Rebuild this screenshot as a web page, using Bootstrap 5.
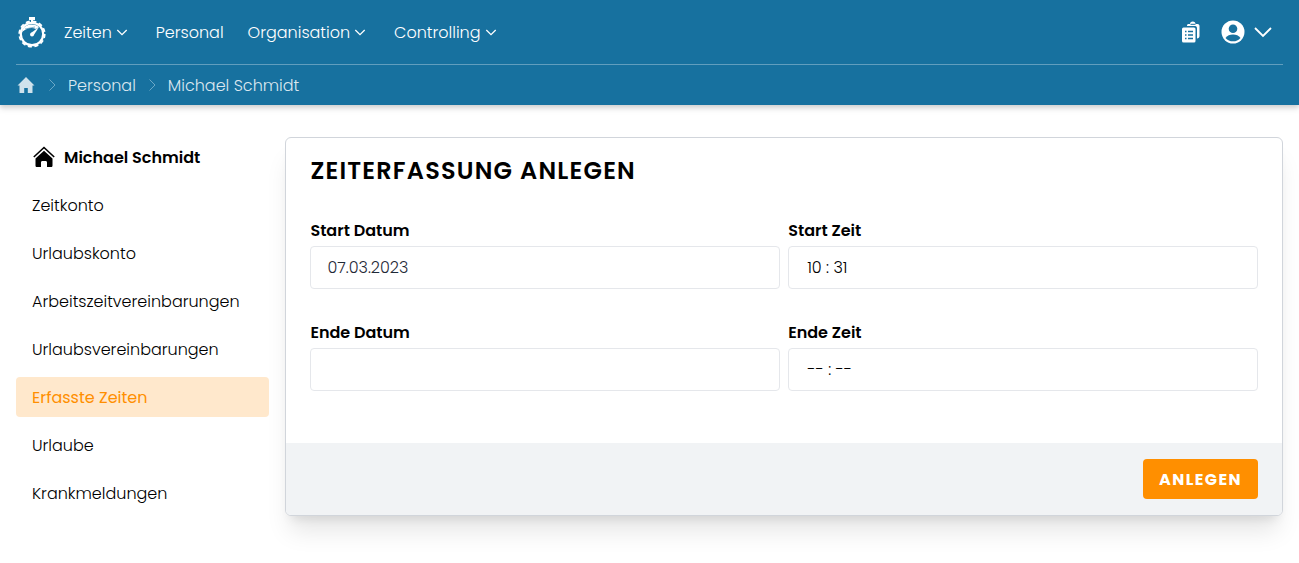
<!DOCTYPE html>
<html lang="de">
<head>
<meta charset="utf-8">
<meta name="viewport" content="width=device-width, initial-scale=1">
<title>Zeiterfassung anlegen</title>
<link href="https://cdn.jsdelivr.net/npm/bootstrap@5.3.0/dist/css/bootstrap.min.css" rel="stylesheet">
<style>
  body { font-family: Poppins, Inter, "Open Sans", sans-serif; font-size: 16px; font-weight: 300; line-height: 24px; color: #000; background: #fff; }
  .app-header { background: #17719f; box-shadow: 0 4px 6px rgba(0,0,0,.1), 0 2px 4px rgba(0,0,0,.1); }
  .main-bar { height: 64px; }
  .menu-gap { gap: 24px; padding-top: 2px; }
  .crumb-bar { height: 41px; border-top: 1px solid rgba(255,255,255,.32); }
  .crumb-bar a { color: rgba(255,255,255,.85); text-decoration: none; }
  .crumb-bar .crumb-text { padding-top: 2px; }
  .side-nav { width: 20%; flex: none; }
  .side-nav .nav-link { color: #000; padding: 9px 16px 7px; border-radius: 4px; }
  .side-nav .nav-link.person { font-weight: 600; }
  .side-nav .nav-link.active { color: #ff8f00; font-weight: 400; background: #ffe8cc; }
  .form-card { border: 1px solid #d1d5db; border-radius: 6px; box-shadow: 0 20px 25px -5px rgba(0,0,0,.1), 0 8px 10px -6px rgba(0,0,0,.1); }
  .form-card .card-body { padding: 17px 24px 52px; }
  .form-card h1 { font-size: 24px; line-height: 32px; font-weight: 600; letter-spacing: .05em; margin-bottom: 32px; }
  .form-card .form-label { font-weight: 600; margin-bottom: 3px; }
  .form-card .form-control { height: 43px; padding: 8px 18px; font-size: 16px; font-weight: 300; color: #000; border: 1px solid #e5e7eb; border-radius: 4px; }
  .form-card .date-field { padding: 8px 16px; color: #1f2937; }
  .form-card .form-control::placeholder { color: #000; opacity: 1; }
  .form-card .card-footer { background: #f1f3f5; border: 0; border-radius: 0 0 5px 5px; padding: 16px 24px; }
  .btn-create { height: 40px; padding: 9px 16px 7px; font-size: 16px; line-height: 24px; font-weight: 700; letter-spacing: .09em; color: #fff; background: #ff8f00; border: 0; border-radius: 4px; }
  .btn-create:hover { color: #fff; background: #e68100; }
  svg { flex: none; display: block; }
</style>
</head>
<body class="min-vh-100">
<header class="app-header px-3">
  <nav class="main-bar d-flex align-items-center" aria-label="Hauptmenü">
    <a href="#" class="text-white me-3" aria-label="Startseite">
      <svg width="32" height="32" viewBox="0 0 32 32" fill="none" stroke="#fff">
        <path d="M13 1h6v3h-2v3h-2V4h-2z" fill="#fff" stroke="none"/>
        <circle cx="16" cy="18" r="11.2" stroke-width="2.2"/>
        <circle cx="16" cy="18" r="12.7" stroke-width="1.8" stroke-dasharray="4 2.65"/>
        <path d="M6 16c1-7 10-10 17-5l-3 2c-4-2-9-1-14 3z" fill="#fff" stroke="none"/>
        <path d="M9 13l10-2M7 16l9-3" stroke="#17719f" stroke-width=".5"/>
        <path d="M15 17L23 11L17.5 19.5z" fill="#fff" stroke="none"/>
        <circle cx="16" cy="18.4" r="2" fill="#fff" stroke="none"/>
      </svg>
    </a>
    <ul class="nav menu-gap">
      <li><a href="#" class="text-white text-decoration-none d-flex align-items-center gap-1">Zeiten <svg width="16" height="12" viewBox="0 0 16 12" fill="none" stroke="#fff" stroke-width="1.3"><path d="M1.300 3L6 7.700l4.700-4.700"/></svg></a></li>
      <li><a href="#" class="text-white text-decoration-none">Personal</a></li>
      <li><a href="#" class="text-white text-decoration-none d-flex align-items-center gap-1">Organisation <svg width="16" height="12" viewBox="0 0 16 12" fill="none" stroke="#fff" stroke-width="1.3"><path d="M1.300 3L6 7.700l4.700-4.700"/></svg></a></li>
      <li><a href="#" class="text-white text-decoration-none d-flex align-items-center gap-1">Controlling <svg width="16" height="12" viewBox="0 0 16 12" fill="none" stroke="#fff" stroke-width="1.3"><path d="M1.300 3L6 7.700l4.700-4.700"/></svg></a></li>
    </ul>
    <div class="ms-auto d-flex align-items-center pe-2">
      <a href="#" class="me-3 pe-1" aria-label="Berichte">
        <svg width="20" height="24" viewBox="0 0 20 24" fill="none">
          <path d="M6 6V5.500C6 4.500 6.800 4 7.500 4H9c0-1.500 1-2.500 2.800-2.500S14.500 2.500 14.500 4h2c1.200 0 2 .8 2 2v10c0 1.500-1 2.500-2.500 2.500V8.500C16 7 15.500 6 14 6z" fill="#fff"/>
          <path d="M9.500 4.300h5" stroke="#17719f" stroke-width="1"/>
          <rect x="1" y="7.500" width="13.500" height="15" rx="1.500" fill="#fff"/>
          <path d="M4 11.500h1.500M7 11.500h5M4 15h1.500M7 15h5M4 18.500h1.500M7 18.500h5" stroke="#17719f" stroke-width="1.500"/>
        </svg>
      </a>
      <button type="button" class="btn border-0 p-0 d-flex align-items-center gap-2" aria-label="Benutzerkonto">
        <svg width="24" height="24" viewBox="0 0 24 24">
          <circle cx="12" cy="12" r="11.500" fill="#fff"/>
          <circle cx="12" cy="8.700" r="4.300" fill="#17719f"/>
          <path d="M4.500 18C6 15.500 9 14.500 12 14.500s6 1 7.500 3.500C17.500 20.500 15 21.300 12 21.300S6.500 20.500 4.500 18z" fill="#17719f"/>
        </svg>
        <svg width="22" height="20" viewBox="0 0 22 20" fill="none" stroke="#fff" stroke-width="1.800"><path d="M2 6l8 8 8-8"/></svg>
      </button>
    </div>
  </nav>
  <nav class="crumb-bar d-flex align-items-center" aria-label="Brotkrumen">
    <a href="#" class="me-2" aria-label="Start">
      <svg width="20" height="20" viewBox="0 0 20 20" fill="#cfe2ec"><path d="M10 2l8.500 8.500h-2V18h-4.700v-5H8.200v5H3.500v-7.500h-2z"/></svg>
    </a>
    <svg class="me-2" width="16" height="16" viewBox="0 0 16 16" fill="none" stroke="#6ba8c7"><path d="M5.500 2.500L11 8l-5.500 5.500"/></svg>
    <a href="#" class="crumb-text me-2">Personal</a>
    <svg class="me-2" width="16" height="16" viewBox="0 0 16 16" fill="none" stroke="#6ba8c7"><path d="M5.500 2.500L11 8l-5.500 5.500"/></svg>
    <a href="#" class="crumb-text" aria-current="page">Michael Schmidt</a>
  </nav>
</header>

<main class="d-flex align-items-start gap-3 px-3 pt-4 pb-5 mt-2">
  <nav class="side-nav nav flex-column gap-2" aria-label="Mitarbeiter">
    <a href="#" class="nav-link person d-flex align-items-center gap-2">
      <svg width="24" height="24" viewBox="0 0 24 24"><path d="M1.800 11L12 1.500l10.200 9.500" fill="none" stroke="#000" stroke-width="1.600"/><path d="M12 4.800l8.500 7.800V19.500c0 1-.6 1.500-1.500 1.500h-4V16.500c0-1-.6-1.500-1.500-1.500h-3c-.9 0-1.500.5-1.500 1.500V21H5c-.9 0-1.500-.5-1.500-1.500v-6.900z"/></svg>
      Michael Schmidt
    </a>
    <a href="#" class="nav-link">Zeitkonto</a>
    <a href="#" class="nav-link">Urlaubskonto</a>
    <a href="#" class="nav-link">Arbeitszeitvereinbarungen</a>
    <a href="#" class="nav-link">Urlaubsvereinbarungen</a>
    <a href="#" class="nav-link active" aria-current="page">Erfasste Zeiten</a>
    <a href="#" class="nav-link">Urlaube</a>
    <a href="#" class="nav-link">Krankmeldungen</a>
  </nav>

  <form class="form-card card flex-grow-1">
    <div class="card-body">
      <h1>ZEITERFASSUNG ANLEGEN</h1>
      <div class="row gx-2 gy-0">
        <div class="col-6 mb-4 pb-2">
          <label class="form-label d-block" for="startDate">Start Datum</label>
          <input class="form-control date-field" id="startDate" type="text" value="07.03.2023">
        </div>
        <div class="col-6 mb-4 pb-2">
          <label class="form-label d-block" for="startTime">Start Zeit</label>
          <input class="form-control" id="startTime" type="text" value="10 : 31">
        </div>
        <div class="col-6">
          <label class="form-label d-block" for="endDate">Ende Datum</label>
          <input class="form-control date-field" id="endDate" type="text">
        </div>
        <div class="col-6">
          <label class="form-label d-block" for="endTime">Ende Zeit</label>
          <input class="form-control" id="endTime" type="text" placeholder="-- : --">
        </div>
      </div>
    </div>
    <div class="card-footer d-flex justify-content-end">
      <button type="submit" class="btn btn-create">ANLEGEN</button>
    </div>
  </form>
</main>
<script src="https://cdn.jsdelivr.net/npm/bootstrap@5.3.0/dist/js/bootstrap.bundle.min.js"></script>
</body>
</html>
